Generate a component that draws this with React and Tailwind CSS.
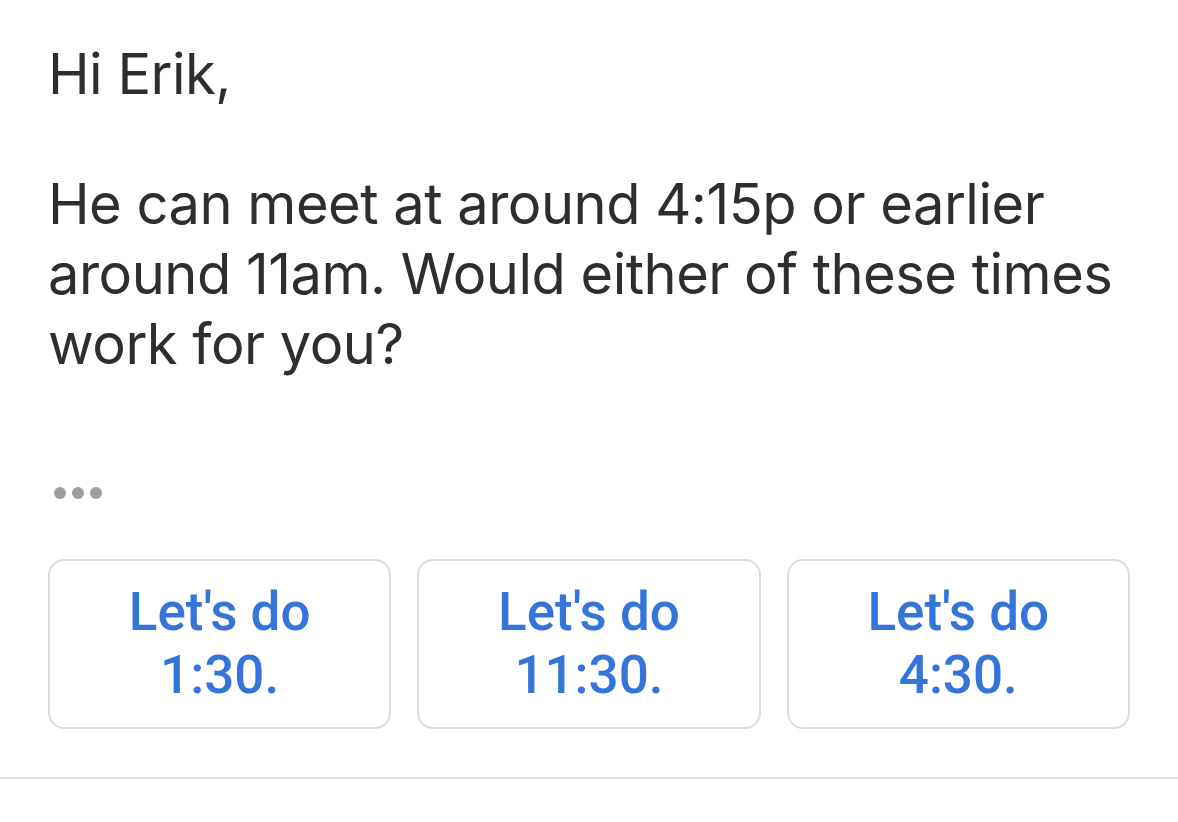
export default function App() {
  const btns = ["1:30.", "11:30.", "4:30."];
  return (
    <div className="w-[1178px] h-[822px] bg-white overflow-hidden">
      <div className="pl-[48px] pr-[48px] pt-[39px]">
        <div
          className="text-[56px] leading-[70px] text-[#2e2e2e] tracking-[-0.5px]"
          style={{ fontFamily: "Inter, 'Liberation Sans', sans-serif" }}
        >
          <p>Hi Erik,</p>
          <p className="mt-[60px]">
            He can meet at around 4:15p or earlier
            <br />
            around 11am. Would either of these times
            <br />
            work for you?
          </p>
        </div>
        <div className="flex gap-[6px] mt-[108px] pl-[6px]">
          <span className="w-[12px] h-[12px] rounded-full bg-[#9aa0a6]" />
          <span className="w-[12px] h-[12px] rounded-full bg-[#9aa0a6]" />
          <span className="w-[12px] h-[12px] rounded-full bg-[#9aa0a6]" />
        </div>
        <div className="flex gap-[26px] mt-[60px]">
          {btns.map((t) => (
            <div
              key={t}
              className="w-[344px] h-[170px] border-2 border-[#dadce0] rounded-[16px] flex items-center justify-center text-center"
            >
              <span
                className="text-[53px] leading-[63px] font-medium text-[#3474db]"
                style={{ fontFamily: "Roboto, 'Open Sans', sans-serif" }}
              >
                Let's do
                <br />
                {t}
              </span>
            </div>
          ))}
        </div>
      </div>
      <div className="mt-[48px] h-[2px] bg-[#e3e3e3]" />
    </div>
  );
}
